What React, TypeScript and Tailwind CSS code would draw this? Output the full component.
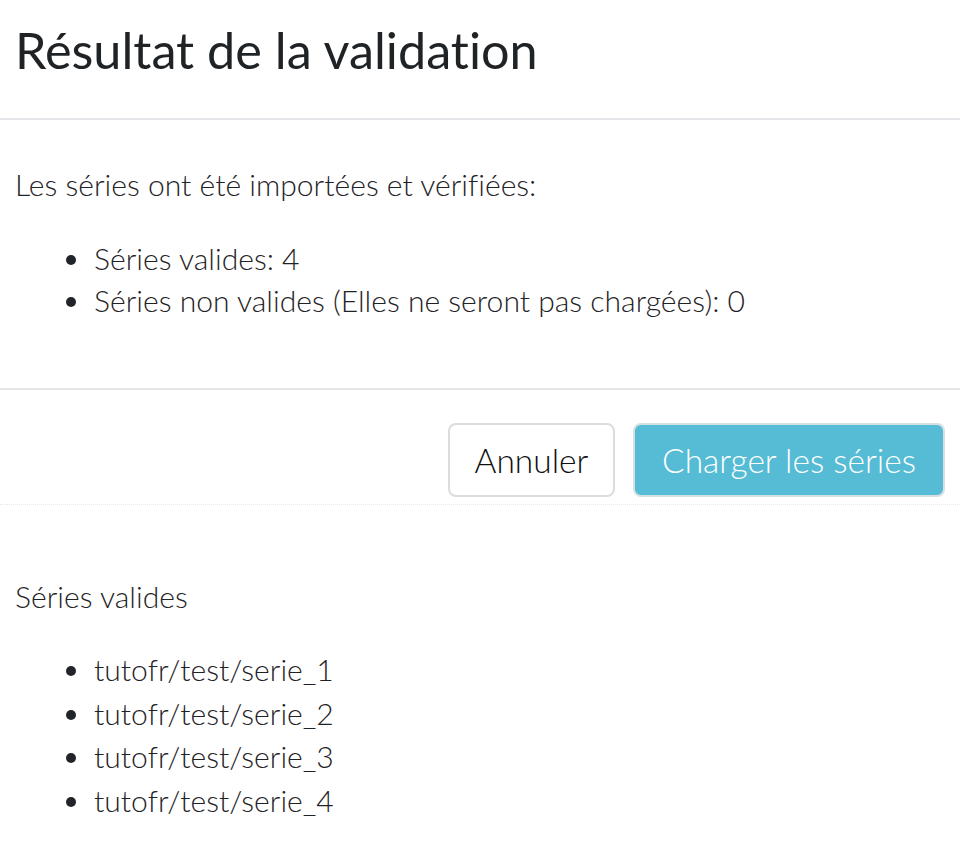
// Résultat de la validation — modal de validation des séries
const summary = [
  'Séries valides: 4',
  'Séries non valides (Elles ne seront pas chargées): 0',
];

const validSeries = [
  'tutofr/test/serie_1',
  'tutofr/test/serie_2',
  'tutofr/test/serie_3',
  'tutofr/test/serie_4',
];

function BulletList({ items, className = '' }: { items: string[]; className?: string }) {
  return (
    <ul className={`list-disc pl-[78px] marker:text-[#212529] ${className}`}>
      {items.map((item) => (
        <li key={item} className="pl-[1px]">
          {item}
        </li>
      ))}
    </ul>
  );
}

export default function App() {
  return (
    <div
      className="w-[960px] min-h-[844px] bg-white text-[#1f2326] font-light [font-variant-ligatures:none]"
      style={{ fontFamily: 'Lato, "Noto Sans", sans-serif' }}
    >
      <header className="h-[120px] px-[15px] pt-[22px] border-b-2 border-[#e3e5e8]">
        <h1 className="text-[50.4px] leading-[56px] font-normal">Résultat de la validation</h1>
      </header>

      <section className="px-[15px] pt-[43px] pb-[67px] text-[30.1px] leading-[42px] border-b-2 border-[#e3e5e8]">
        <p>Les séries ont été importées et vérifiées:</p>
        <BulletList items={summary} className="mt-[32px]" />
      </section>

      <footer className="flex justify-end gap-[18px] px-[15px] pt-[33px] pb-[7px] border-b border-dotted border-[#e8e8e8]">
        <button className="w-[167px] h-[74px] rounded-[8px] border-2 border-[#dcdcdc] bg-white text-[33.5px] text-[#111]">
          Annuler
        </button>
        <button className="w-[312px] h-[74px] rounded-[8px] border-2 border-[#d6dfe2] bg-[#56bbd4] text-[33.5px] text-white">
          Charger les séries
        </button>
      </footer>

      <section className="px-[15px] pt-[70px] text-[30.1px] leading-[42px]">
        <p>Séries valides</p>
        <BulletList items={validSeries} className="mt-[31px] leading-[43.5px]" />
      </section>
    </div>
  );
}
